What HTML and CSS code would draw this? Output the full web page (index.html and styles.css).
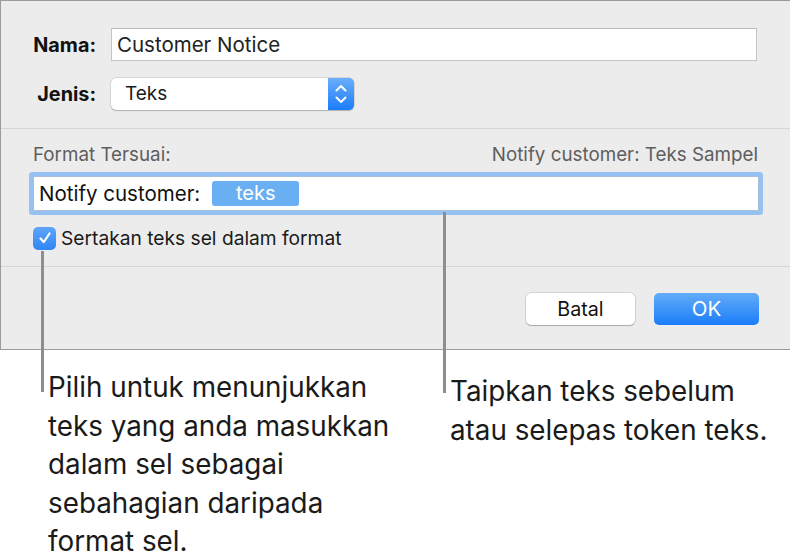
FILE: index.html
```html
<!DOCTYPE html>
<html lang="ms">
<head>
<meta charset="utf-8">
<title>Format Tersuai</title>
<link rel="stylesheet" href="styles.css">
</head>
<body>
<div class="page">
  <div class="dialog">
    <div class="sec-top">
      <div class="row">
        <span class="lbl">Nama:</span>
        <div class="textfield">Customer Notice</div>
      </div>
      <div class="row">
        <span class="lbl">Jenis:</span>
        <div class="popup">
          <span class="popup-text">Teks</span>
          <span class="stepper">
            <svg width="14" height="22" viewBox="0 0 14 22"><path d="M2.5 7.5 L7 3 L11.5 7.5 M2.5 14.5 L7 19 L11.5 14.5" fill="none" stroke="#fff" stroke-width="2" stroke-linecap="round" stroke-linejoin="round"/></svg>
          </span>
        </div>
      </div>
    </div>
    <div class="sec-mid">
      <div class="fmt-head">
        <span>Format Tersuai:</span>
        <span>Notify customer: Teks Sampel</span>
      </div>
      <div class="tokenfield">
        <span>Notify customer:</span>
        <span class="token">teks</span>
      </div>
      <div class="check">
        <span class="box"><svg width="16" height="16" viewBox="0 0 16 16"><path d="M3.5 8.5 L6.8 12 L12.5 3.5" fill="none" stroke="#fff" stroke-width="2.2" stroke-linecap="round" stroke-linejoin="round"/></svg></span>
        <span class="check-label">Sertakan teks sel dalam format</span>
      </div>
    </div>
    <div class="sec-bot">
      <span class="btn btn-cancel">Batal</span>
      <span class="btn btn-ok">OK</span>
    </div>
  </div>
  <div class="callouts">
    <p class="note note-left">Pilih untuk menunjukkan teks yang anda masukkan dalam sel sebagai sebahagian daripada format sel.</p>
    <p class="note note-right">Taipkan teks sebelum atau selepas token teks.</p>
  </div>
  <span class="line line-left"></span>
  <span class="line line-right"></span>
</div>
</body>
</html>
```
FILE: styles.css
```css
* { box-sizing: border-box; }
html, body { margin: 0; padding: 0; background: #fff; }
body {
  font-family: Inter, "Liberation Sans", sans-serif;
  color: #1d1d1d;
  width: 790px;
}
.page { position: relative; width: 790px; }

.dialog {
  width: 790px;
  height: 350px;
  background: #ececec;
  border: 1px solid #9b9b9b;
  border-right: none;
  display: flex;
  flex-direction: column;
}

.sec-top {
  padding: 27px 0 18px 0;
  border-bottom: 1px solid #d6d6d6;
  display: flex;
  flex-direction: column;
  gap: 17px;
}
.row { display: flex; align-items: center; }
.lbl {
  width: 95px;
  text-align: right;
  font-weight: 700;
  font-size: 19.8px;
  margin-right: 15px;
  color: #111;
}
.textfield {
  width: 646px;
  height: 33px;
  background: #fff;
  border: 1px solid #c4c4c4;
  border-top-color: #bdbdbd;
  font-size: 20.5px;
  line-height: 31px;
  padding-left: 5px;
  color: #222;
}
.popup {
  width: 243px;
  height: 32px;
  background: #fff;
  border-radius: 5px;
  box-shadow: 0 0 0 0.5px rgba(0,0,0,0.18), 0 1px 1px rgba(0,0,0,0.18);
  display: flex;
  justify-content: space-between;
  align-items: stretch;
  overflow: hidden;
}
.popup-text { font-size: 19px; line-height: 32px; padding-left: 14px; color: #1a1a1a; }
.stepper {
  width: 26px;
  background: linear-gradient(#6aaefb, #1b7cf8);
  display: flex;
  align-items: center;
  justify-content: center;
}

.sec-mid {
  padding: 14px 0 0 0;
  height: 138px;
  border-bottom: 1px solid #d6d6d6;
}
.fmt-head {
  display: flex;
  justify-content: space-between;
  padding: 0 32px 0 32px;
  font-size: 18.8px;
  line-height: 24px;
  color: #5e5e5e;
}
.tokenfield {
  margin: 9px 0 0 32px;
  width: 726px;
  height: 35px;
  background: #fff;
  border: 1px solid #a9bfd8;
  border-radius: 1px;
  box-shadow: 0 0 0 4px #95c2f3;
  display: flex;
  align-items: center;
  padding-left: 5px;
  font-size: 20.5px;
  color: #111;
}
.token {
  margin-left: 12px;
  width: 87px;
  height: 25px;
  border-radius: 3px;
  background: #6aaff1;
  color: #fff;
  text-align: center;
  line-height: 25px;
  font-size: 20px;
}
.check {
  margin: 15px 0 0 32px;
  display: flex;
  align-items: center;
  gap: 5px;
}
.box {
  width: 23px;
  height: 23px;
  border-radius: 5px;
  background: linear-gradient(#5ea5f8, #2f86f5);
  display: flex;
  align-items: center;
  justify-content: center;
}
.check-label { font-size: 19.2px; color: #1a1a1a; }

.sec-bot {
  flex: 1;
  display: flex;
  justify-content: flex-end;
  align-items: flex-start;
  padding: 26px 31px 0 0;
  gap: 19px;
}
.btn {
  height: 32px;
  border-radius: 5px;
  line-height: 32px;
  text-align: center;
}
.btn-cancel {
  width: 109px;
  background: #fff;
  box-shadow: 0 0 0 0.5px rgba(0,0,0,0.2), 0 1px 1px rgba(0,0,0,0.2);
  color: #111;
  font-size: 19.7px;
}
.btn-ok {
  width: 105px;
  background: linear-gradient(#64acfa, #1a7df8);
  color: #fff;
  font-size: 20.5px;
}

.callouts {
  display: flex;
  align-items: flex-start;
  padding-top: 18px;
}
.note {
  margin: 0;
  font-size: 27.8px;
  line-height: 38.5px;
  color: #1a1a1a;
}
.note-left { margin-left: 48px; width: 350px; }
.note-right { margin-left: 52px; margin-top: 4px; width: 330px; }

.line {
  position: absolute;
  width: 3px;
  background: #8e8e8e;
}
.line-left { left: 41px; top: 251px; height: 141px; }
.line-right { left: 443px; top: 212px; height: 181px; }
```
